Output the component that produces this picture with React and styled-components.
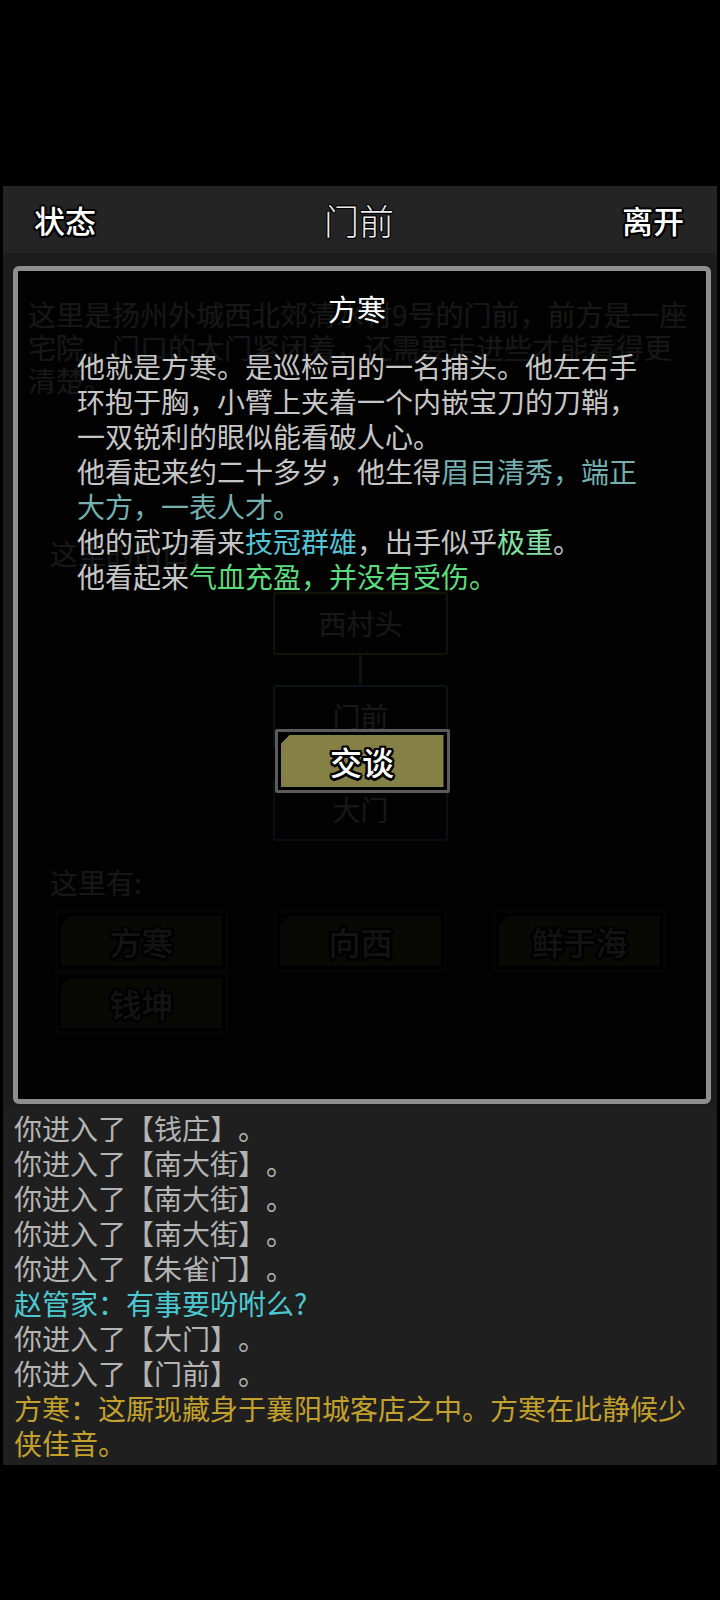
import React from "react";
import styled, { createGlobalStyle } from "styled-components";

const GlobalStyle = createGlobalStyle`
  html, body {
    margin: 0;
    padding: 0;
    background: #000;
  }
  body {
    font-family: "Noto Sans CJK SC", "Noto Sans", sans-serif;
    text-spacing-trim: space-all;
  }
`;

const ink = (w) =>
  `-${w}px 0 #000, ${w}px 0 #000, 0 -${w}px #000, 0 ${w}px #000,
   -${w * 0.75}px -${w * 0.75}px #000, ${w * 0.75}px -${w * 0.75}px #000,
   -${w * 0.75}px ${w * 0.75}px #000, ${w * 0.75}px ${w * 0.75}px #000`;

const Screen = styled.div`
  margin-top: 186px;
  padding: 0 3px;
`;

const TopBar = styled.header`
  height: 67px;
  background: #242424;
  display: grid;
  grid-template-columns: 1fr auto 1fr;
  align-items: center;
  padding: 0 33px 0 31px;
  box-sizing: border-box;
`;

const SideLabel = styled.span`
  justify-self: ${(p) => (p.$end ? "end" : "start")};
  font-size: 31px;
  font-weight: 500;
  color: #fff;
  text-shadow: ${ink(2)};
`;

const PlaceTitle = styled.h1`
  margin: 0;
  font-size: 35px;
  font-weight: 300;
  color: #ededed;
  text-shadow: ${ink(1)};
`;

const Stage = styled.main`
  position: relative;
  height: 854px;
  background: #1c1c1c;
  overflow: hidden;
`;

const Scene = styled.section`
  padding: 45px 19px 0 25px;
  color: #e6e6e6;
  font-size: 28px;
  line-height: 33px;
`;

const Description = styled.p`
  margin: 0;
  width: 670px;
`;

const SectionLabel = styled.div`
  margin-top: ${(p) => p.$gap}px;
  padding-left: 22px;
`;

const ExitMap = styled.div`
  margin-top: 22px;
  display: flex;
  flex-direction: column;
  align-items: center;
  padding-right: 5px;
`;

const RoomBox = styled.div`
  box-sizing: border-box;
  width: 175px;
  height: 63px;
  border: 2px solid ${(p) => p.$edge};
  border-radius: 3px;
  display: flex;
  align-items: center;
  justify-content: center;
`;

const Link = styled.div`
  width: 3px;
  height: 30px;
  background: #6ac8e8;
`;

const NpcGrid = styled.div`
  margin: 11px 0 0 27px;
  width: 611px;
  display: grid;
  grid-template-columns: repeat(3, 173px);
  justify-content: space-between;
`;

const ActionButton = styled.div`
  box-sizing: border-box;
  width: ${(p) => p.$w}px;
  height: ${(p) => p.$h}px;
  border: 3px solid ${(p) => (p.$dim ? "#3a3a3a" : "#5b5b5b")};
  border-radius: 2px;
  padding: 3px;
  background: #000;
  align-self: ${(p) => (p.$center ? "center" : "auto")};
  margin-top: ${(p) => p.$top || 0}px;
`;

const ButtonFace = styled.div`
  height: 100%;
  background: ${(p) => (p.$dim ? "#545028" : "#858045")};
  clip-path: polygon(9px 0, 100% 0, 100% 100%, 0 100%, 0 9px);
  display: flex;
  align-items: center;
  justify-content: center;
  font-size: 32px;
  font-weight: 500;
  line-height: 1;
  color: ${(p) => (p.$dim ? "#bdbdbd" : "#fff")};
  text-shadow: ${ink(2.5)};
`;

const Dialog = styled.div`
  position: absolute;
  top: 13px;
  left: 10px;
  right: 6px;
  bottom: 3px;
  box-sizing: border-box;
  border: 5px solid #8e8e8e;
  border-radius: 6px;
  background: rgba(0, 0, 0, 0.9);
  display: flex;
  flex-direction: column;
  padding-top: 19px;
`;

const DialogTitle = styled.div`
  text-align: center;
  margin-right: 10px;
  font-size: 29px;
  line-height: 36px;
  color: #fff;
`;

const Bio = styled.div`
  margin: 23px 0 0 59px;
  width: 575px;
  font-size: 28px;
  line-height: 35px;
  color: #c6c6c6;
`;

const Hl = styled.span`
  color: ${(p) => p.$c};
`;

const Log = styled.section`
  box-sizing: border-box;
  height: 358px;
  background: #1f1f1f;
  padding: 4px 11px;
  font-size: 28px;
  line-height: 35px;
`;

const LogLine = styled.div`
  color: ${(p) =>
    p.$tone === "npc" ? "#4cc9d0" : p.$tone === "quest" ? "#c4a12c" : "#b4b4b4"};
`;

const logLines = [
  ["你进入了【钱庄】。"],
  ["你进入了【南大街】。"],
  ["你进入了【南大街】。"],
  ["你进入了【南大街】。"],
  ["你进入了【朱雀门】。"],
  ["赵管家：有事要吩咐么?", "npc"],
  ["你进入了【大门】。"],
  ["你进入了【门前】。"],
  ["方寒：这厮现藏身于襄阳城客店之中。方寒在此静候少侠佳音。", "quest"],
];

const npcs = ["方寒", "向西", "鲜于海", "钱坤"];

export default function App() {
  return (
    <>
      <GlobalStyle />
      <Screen>
        <TopBar>
          <SideLabel>状态</SideLabel>
          <PlaceTitle>门前</PlaceTitle>
          <SideLabel $end>离开</SideLabel>
        </TopBar>

        <Stage>
          <Scene>
            <Description>
              这里是扬州外城西北郊清水村9号的门前，前方是一座宅院，门口的大门紧闭着，还需要走进些才能看得更清楚。
            </Description>
            <SectionLabel $gap={140}>这里的出口：</SectionLabel>
            <ExitMap>
              <RoomBox $edge="#d8c050">西村头</RoomBox>
              <Link />
              <RoomBox $edge="#6ac8e8">门前</RoomBox>
              <Link />
              <RoomBox $edge="#5aa0b8">大门</RoomBox>
            </ExitMap>
            <SectionLabel $gap={25}>这里有:</SectionLabel>
            <NpcGrid>
              {npcs.map((n) => (
                <ActionButton key={n} $w={173} $h={62} $dim>
                  <ButtonFace $dim>{n}</ButtonFace>
                </ActionButton>
              ))}
            </NpcGrid>
          </Scene>

          <Dialog>
            <DialogTitle>方寒</DialogTitle>
            <Bio>
              <div>
                他就是方寒。是巡检司的一名捕头。他左右手环抱于胸，小臂上夹着一个内嵌宝刀的刀鞘，一双锐利的眼似能看破人心。
              </div>
              <div>
                他看起来约二十多岁，他生得
                <Hl $c="#74b0b0">眉目清秀，端正大方，一表人才。</Hl>
              </div>
              <div>
                他的武功看来<Hl $c="#52c4d4">技冠群雄</Hl>，出手似乎
                <Hl $c="#82e0a2">极重</Hl>。
              </div>
              <div>
                他看起来<Hl $c="#5adc7c">气血充盈，并没有受伤。</Hl>
              </div>
            </Bio>
            <ActionButton $w={175} $h={64} $center $top={135}>
              <ButtonFace>交谈</ButtonFace>
            </ActionButton>
          </Dialog>
        </Stage>

        <Log>
          {logLines.map(([t, tone], i) => (
            <LogLine key={i} $tone={tone}>
              {t}
            </LogLine>
          ))}
        </Log>
      </Screen>
    </>
  );
}
